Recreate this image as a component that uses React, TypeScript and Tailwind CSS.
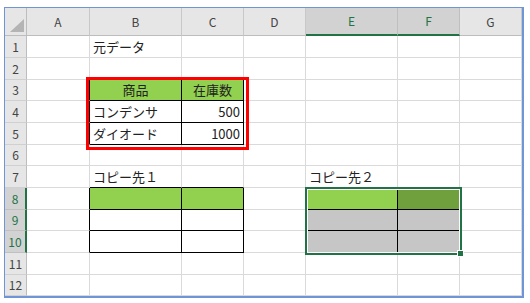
import React from "react";

const COLS = ["A", "B", "C", "D", "E", "F", "G"];
const ROWS = [1, 2, 3, 4, 5, 6, 7, 8, 9, 10, 11, 12];

type Cell = { text: string; align?: "left" | "right" | "center" };

const values: Record<string, Cell> = {
  "1-1": { text: "元データ" },
  "3-1": { text: "商品", align: "center" },
  "3-2": { text: "在庫数", align: "center" },
  "4-1": { text: "コンデンサ" },
  "4-2": { text: "500", align: "right" },
  "5-1": { text: "ダイオード" },
  "5-2": { text: "1000", align: "right" },
  "7-1": { text: "コピー先１" },
  "7-4": { text: "コピー先２" },
};

// ranges with thin black borders: [rowFrom, rowTo, colFrom, colTo]
const tables = [
  [3, 5, 1, 2],
  [8, 10, 1, 2],
  [8, 10, 4, 5],
];

const inTable = (r: number, c: number) =>
  tables.some(([r1, r2, c1, c2]) => r >= r1 && r <= r2 && c >= c1 && c <= c2);

const isSelected = (r: number, c: number) => r >= 8 && r <= 10 && c >= 4 && c <= 5;

function cellBg(r: number, c: number) {
  if (r === 8 && c === 4) return "bg-[#92d050]";
  if (r === 8 && c === 5) return "bg-[#70a03d]";
  if (isSelected(r, c)) return "bg-[#c6c6c6]";
  if ((r === 3 || r === 8) && inTable(r, c)) return "bg-[#92d050]";
  return "bg-white";
}

function GridCell({ r, c }: { r: number; c: number }) {
  const right = inTable(r, c) || inTable(r, c + 1);
  const bottom = inTable(r, c) || inTable(r + 1, c);
  const v = values[`${r}-${c}`];
  const align =
    v?.align === "right" ? "justify-end pr-[3px]" : v?.align === "center" ? "justify-center" : "justify-start pl-[3px]";
  return (
    <div
      className={`flex items-center overflow-visible whitespace-nowrap border-r border-b text-[13px] text-[#222] ${align} ${cellBg(r, c)} ${
        right ? "border-r-black" : "border-r-[#dadada]"
      } ${bottom ? "border-b-black" : "border-b-[#dadada]"}`}
    >
      {v?.text}
    </div>
  );
}

export default function App() {
  return (
    <div className="bg-white w-[530px] h-[303px] pl-[4px] pt-[7px] font-['Noto_Sans_CJK_JP','Noto_Sans',sans-serif]">
      <div className="relative w-[520px] overflow-hidden border-t border-l border-r-2 border-b-2 border-[#6f95d6]">
        <div className="grid grid-cols-[22px_63px_92px_62px_62px_92px_62px_62px] grid-rows-[28px_22px_22px_21px_22px_22px_21px_22px_22px_21px_22px_22px_21px]">
          {/* corner */}
          <div className="relative bg-[#e6e6e6] border-r border-b border-[#bdbdbd]">
            <svg className="absolute right-[2px] bottom-[3px]" width="14" height="13" viewBox="0 0 14 13">
              <polygon points="14,0 14,13 0,13" fill="#b4b4b4" />
            </svg>
          </div>
          {COLS.map((col, c) => {
            const sel = c === 4 || c === 5;
            return (
              <div
                key={col}
                className={`flex items-center justify-center text-[12px] border-r ${
                  sel
                    ? "bg-[#d2d2d2] text-[#217346] border-r-[#bfbfbf] border-b-2 border-b-[#217346]"
                    : "bg-[#e6e6e6] text-[#444] border-r-[#c8c8c8] border-b border-b-[#bdbdbd]"
                }`}
              >
                {col}
              </div>
            );
          })}
          {ROWS.map((r) => {
            const sel = r >= 8 && r <= 10;
            return (
              <React.Fragment key={r}>
                <div
                  className={`flex items-center justify-center text-[12px] border-b ${
                    sel
                      ? "bg-[#d2d2d2] text-[#217346] border-b-[#c0c0c0] border-r-2 border-r-[#217346]"
                      : "bg-[#e6e6e6] text-[#444] border-b-[#d0d0d0] border-r border-r-[#bdbdbd]"
                  }`}
                >
                  {r}
                </div>
                {COLS.map((col, c) => (
                  <GridCell key={col} r={r} c={c} />
                ))}
              </React.Fragment>
            );
          })}
        </div>

        {/* red frame around the source table */}
        <div className="pointer-events-none absolute left-[81px] top-[69px] w-[163px] h-[73px] border-[3px] border-[#ff0000]" />

        {/* selection E8:F10 */}
        <div className="pointer-events-none absolute left-[300px] top-[179px] w-[157px] h-[68px] border-2 border-[#217346] shadow-[inset_0_0_0_1px_#ffffff]" />
        <div className="pointer-events-none absolute left-[452px] top-[242px] w-[7px] h-[7px] bg-[#217346] border border-white" />
      </div>
    </div>
  );
}
